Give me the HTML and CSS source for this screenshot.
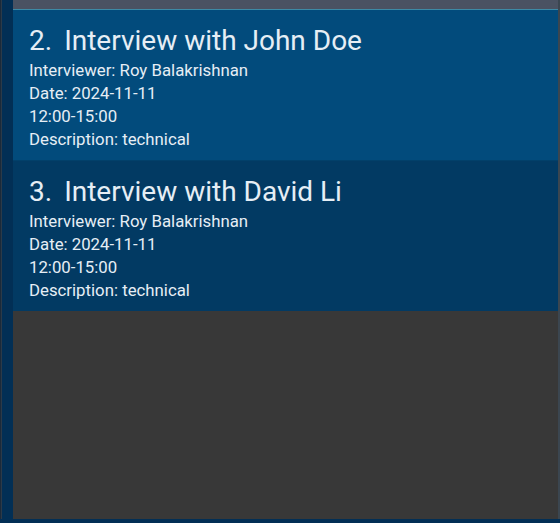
FILE: index.html
```html
<!DOCTYPE html>
<html>
<head>
<meta charset="utf-8">
<link rel="stylesheet" href="styles.css">
</head>
<body>
<div class="frame">
  <div class="sidebar"></div>
  <div class="panel">
    <div class="topbar"></div>
    <div class="list">
      <div class="card card-a">
        <div class="title"><span class="num">2.</span><span>Interview with John Doe</span></div>
        <div class="line">Interviewer: Roy Balakrishnan</div>
        <div class="line">Date: 2024-11-11</div>
        <div class="line">12:00-15:00</div>
        <div class="line">Description: technical</div>
      </div>
      <div class="card card-b">
        <div class="title"><span class="num">3.</span><span>Interview with David Li</span></div>
        <div class="line">Interviewer: Roy Balakrishnan</div>
        <div class="line">Date: 2024-11-11</div>
        <div class="line">12:00-15:00</div>
        <div class="line">Description: technical</div>
      </div>
      <div class="empty"></div>
    </div>
  </div>
</div>
</body>
</html>
```

FILE: styles.css
```css
html, body {
  margin: 0;
  padding: 0;
  height: 100%;
  background: #022f55;
}
.frame {
  display: flex;
  height: 523px;
  width: 560px;
  box-sizing: border-box;
  padding-bottom: 4px;
}
.sidebar {
  width: 13px;
  flex: none;
  background: #022f55;
  border-left: 1px solid #1b2a3a;
  box-sizing: border-box;
  box-shadow: inset 1px 0 0 #2c3a48;
}
.panel {
  flex: 1;
  display: flex;
  flex-direction: column;
  border-right: 2px solid #3b4650;
}
.topbar {
  height: 9px;
  background: #4a5262;
  border-bottom: 1px solid #3d8aa6;
  flex: none;
}
.list {
  flex: 1;
  display: flex;
  flex-direction: column;
  background: #383838;
}
.card {
  padding: 13px 16px 9px 16px;
  color: #e6eef5;
  font-family: Roboto, "Noto Sans", sans-serif;
}
.card-a {
  background: #024b7c;
  border-bottom: 1px solid #02406a;
}
.card-b {
  background: #023a63;
}
.title {
  font-size: 28px;
  line-height: 35px;
  display: flex;
  gap: 12px;
  margin-bottom: 1px;
}
.line {
  font-size: 16.8px;
  line-height: 23px;
}
.empty {
  flex: 1;
}
```
